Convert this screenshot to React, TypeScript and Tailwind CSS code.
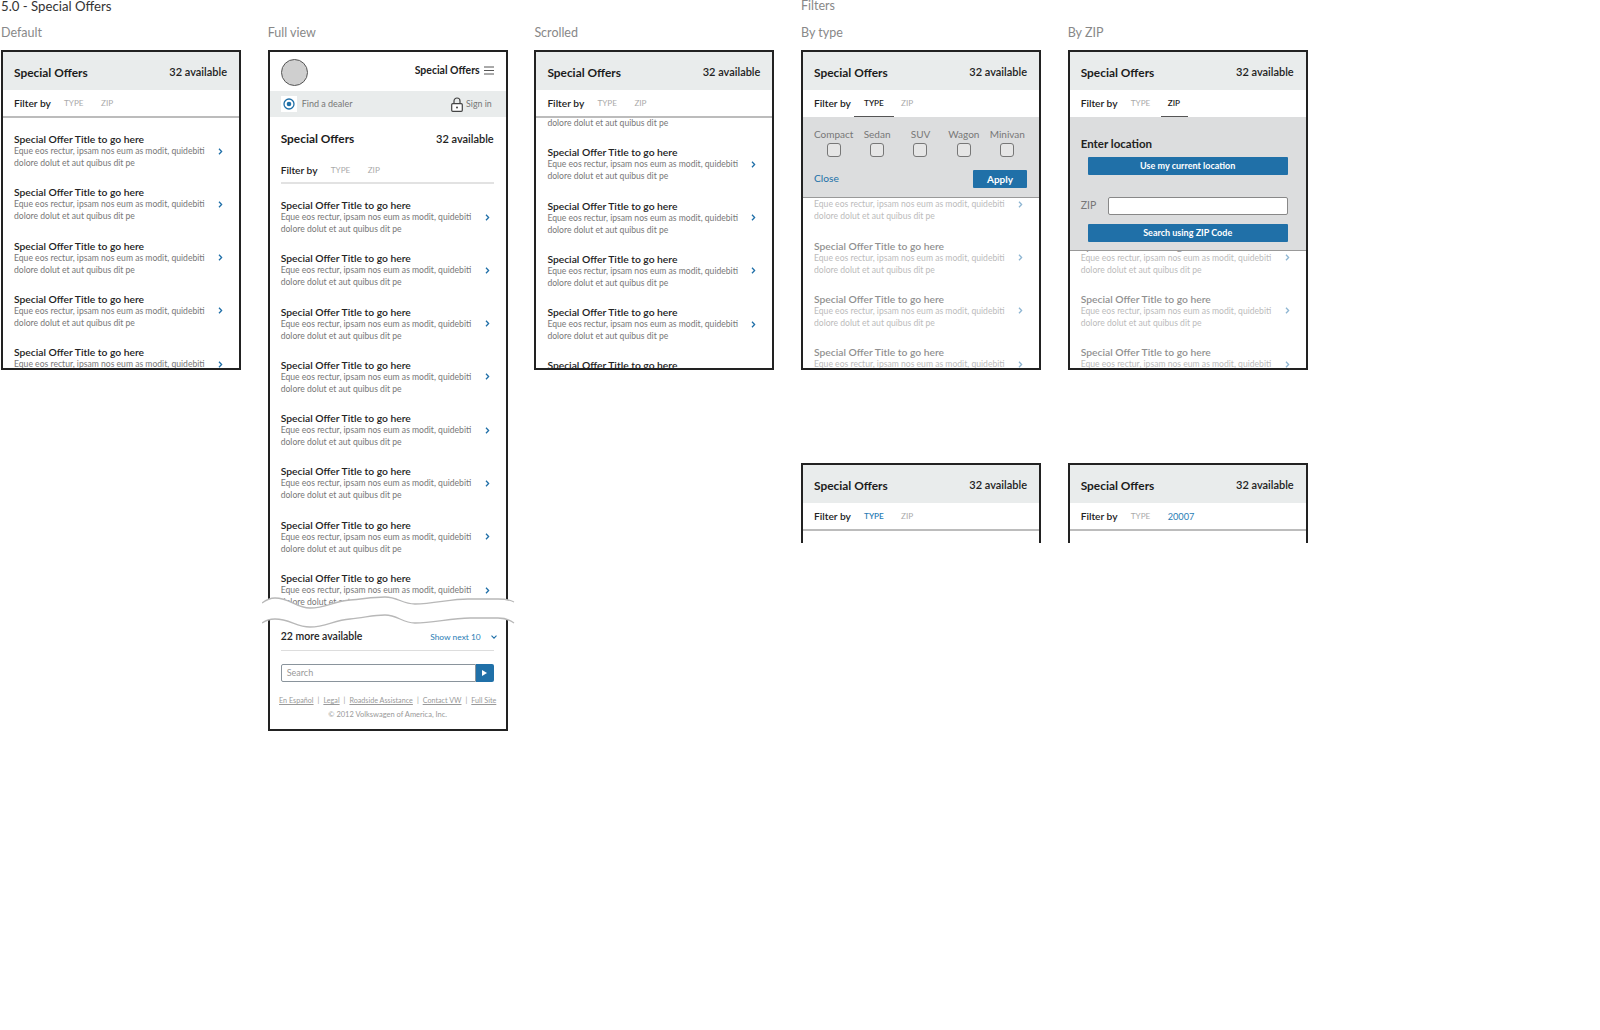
const FONT = "font-['Lato','Liberation_Sans',sans-serif]";

function Chevron() {
  return (
    <svg width="5" height="7" viewBox="0 0 5 7" className="shrink-0">
      <path d="M1 0.8 L3.6 3.5 L1 6.2" fill="none" stroke="#1f6fa8" strokeWidth="1.3" />
    </svg>
  );
}

function Item() {
  return (
    <div className="h-[53.3px] shrink-0 pt-[15px] pl-[11px]">
      <div className="h-[12px] text-[10.3px] leading-[12px] font-semibold text-[#222] whitespace-nowrap">
        Special Offer Title to go here
      </div>
      <div className="flex h-[12px] items-center">
        <div className="w-[204px] text-[8.6px] leading-[12px] text-[#777] whitespace-nowrap">
          Eque eos rectur, ipsam nos eum as modit, quidebiti
        </div>
        <Chevron />
      </div>
      <div className="h-[12px] text-[8.6px] leading-[12px] text-[#777] whitespace-nowrap">
        dolore dolut et aut quibus dit pe
      </div>
    </div>
  );
}

function Items({ count, dim = false }: { count: number; dim?: boolean }) {
  return (
    <div className={dim ? "flex flex-col opacity-50" : "flex flex-col"}>
      {Array.from({ length: count }, (_, i) => (
        <Item key={i} />
      ))}
    </div>
  );
}

function Header() {
  return (
    <div className="flex h-[38px] items-center justify-between bg-[#e9ecec] pt-[3px] pr-[12px] pl-[11px]">
      <span className="text-[11.9px] font-bold text-[#1c1c1c]">Special Offers</span>
      <span className="text-[11px] font-semibold text-[#222]">32 available</span>
    </div>
  );
}

function FilterRow({ type = "plain", zip = "ZIP", active }: { type?: string; zip?: string; active?: "type" | "zip" }) {
  return (
    <div
      className={
        active
          ? "relative flex h-[28px] items-center border-b-2 border-transparent pt-[1px] pl-[11px] text-[8.2px]"
          : "relative flex h-[28px] items-center border-b-2 border-[#bcbcbc] pt-[1px] pl-[11px] text-[8.2px]"
      }
    >
      <span className="w-[50px] text-[10.2px] font-semibold text-[#222]">Filter by</span>
      <span
        className={
          type === "blue"
            ? "w-[37px] font-semibold text-[#2a7db5]"
            : active === "type"
              ? "w-[37px] font-semibold text-[#222]"
              : "w-[37px] text-[#aaa]"
        }
      >
        TYPE
      </span>
      <span
        className={
          zip === "20007"
            ? "text-[9.2px] text-[#2a7db5]"
            : active === "zip"
              ? "font-semibold text-[#222]"
              : "text-[#aaa]"
        }
      >
        {zip}
      </span>
      {active === "type" && <div className="absolute bottom-[-1px] left-[51px] h-[1px] w-[40px] bg-[#555]" />}
      {active === "zip" && <div className="absolute bottom-[-1px] left-[91px] h-[1px] w-[27px] bg-[#555]" />}
    </div>
  );
}

function Phone({ children }: { children: React.ReactNode }) {
  return <div className="relative h-[320px] w-[240px] overflow-hidden border-2 border-[#222]">{children}</div>;
}

function TypePanel() {
  const kinds = ["Compact", "Sedan", "SUV", "Wagon", "Minivan"];
  return (
    <div className="absolute inset-x-0 top-[65px] h-[81px] border-b border-[#999] bg-[#dcddde] pt-[11px]">
      <div className="ml-[9px] grid w-[217px] grid-cols-5">
        {kinds.map((k) => (
          <div key={k} className="flex flex-col items-center">
            <span className="h-[12px] text-[10px] leading-[12px] text-[#777]">{k}</span>
            <span className="mt-[3px] h-[14px] w-[14px] rounded-[3px] border border-[#777] bg-[#e6e6e6]" />
          </div>
        ))}
      </div>
      <div className="mt-[13px] flex items-center justify-between pr-[12px] pl-[11px]">
        <span className="text-[10.2px] text-[#2070a8]">Close</span>
        <span className="flex h-[18px] w-[54px] items-center justify-center rounded-[1px] bg-[#2070a8] text-[10px] font-bold text-white">
          Apply
        </span>
      </div>
    </div>
  );
}

function BlueButton({ label }: { label: string }) {
  return (
    <div className="ml-[18px] flex h-[18px] w-[200px] items-center justify-center rounded-[1px] bg-[#2070a8] text-[9px] font-bold text-white">
      {label}
    </div>
  );
}

function ZipPanel() {
  return (
    <div className="absolute inset-x-0 top-[65px] h-[134px] border-b border-[#999] bg-[#dcddde] pt-[20px]">
      <div className="h-[14px] pl-[11px] text-[11.5px] leading-[14px] font-bold text-[#222]">Enter location</div>
      <div className="mt-[6px]">
        <BlueButton label="Use my current location" />
      </div>
      <div className="mt-[22px] flex items-center pl-[11px]">
        <span className="w-[27px] text-[10.5px] text-[#777]">ZIP</span>
        <div className="h-[18px] w-[180px] rounded-[2px] border border-[#888] bg-white" />
      </div>
      <div className="mt-[9px]">
        <BlueButton label="Search using ZIP Code" />
      </div>
    </div>
  );
}

function Tear() {
  const top = "M0 13 C4 10 8 8 13 8 C28 8 34 18 48 18 C64 18 72 11 88 10 C102 9 110 7 123 7 C136 7 140 14 153 14 C172 14 188 9 206 9 C216 9 226 9 236 9 C243 9 248 10 252 12";
  const bottom = "M0 33 C4 30 8 29 13 29 C28 29 34 37 48 37 C64 37 72 30 88 29 C102 28 110 25 123 25 C136 25 140 33 153 33 C172 33 188 28 208 28 C218 28 226 28 236 28 C243 28 248 30 252 33";
  const fill = `${top} L252 33 C248 30 243 28 236 28 C226 28 218 28 208 28 C188 28 172 33 153 33 C140 33 136 25 123 25 C110 25 102 28 88 29 C72 30 64 37 48 37 C34 37 28 29 13 29 C8 29 4 30 0 33 Z`;
  return (
    <svg width="254" height="40" viewBox="0 0 254 40" className="absolute left-[-8px] top-[538px]">
      <path d={fill} fill="#fff" />
      <path d={top} fill="none" stroke="#b8b8b8" strokeWidth="1.3" />
      <path d={bottom} fill="none" stroke="#b8b8b8" strokeWidth="1.3" />
    </svg>
  );
}

function FullView() {
  const links = ["En Español", "Legal", "Roadside Assistance", "Contact VW", "Full Site"];
  return (
    <div className="relative w-[240px] border-2 border-[#222]">
      <div className="flex h-[39px] items-center justify-between pr-[12px] pl-[11px]">
        <div className="mt-[1px] h-[27px] w-[27px] rounded-full border border-[#555] bg-[#cfcfcf]" />
        <div className="mt-[-2px] flex items-center gap-[4px]">
          <span className="text-[10.5px] font-bold text-[#222]">Special Offers</span>
          <svg width="10" height="9" viewBox="0 0 10 9">
            <path d="M0 1H10M0 4.5H10M0 8H10" stroke="#555" strokeWidth="1" />
          </svg>
        </div>
      </div>
      <div className="flex h-[26px] items-center justify-between bg-[#e9ecec] pr-[14px] pl-[11px]">
        <div className="flex items-center gap-[5px]">
          <div className="flex h-[16px] w-[16px] items-center justify-center bg-white">
            <svg width="12" height="12" viewBox="0 0 12 12">
              <circle cx="6" cy="6" r="5" fill="none" stroke="#2070a8" strokeWidth="1.3" />
              <circle cx="6" cy="6" r="2.3" fill="#2070a8" />
            </svg>
          </div>
          <span className="text-[9px] text-[#777]">Find a dealer</span>
        </div>
        <div className="flex items-center gap-[3px]">
          <svg width="12" height="15" viewBox="0 0 12 15">
            <path d="M3 7V4a3 3 0 0 1 6 0v3" fill="none" stroke="#444" strokeWidth="1.2" />
            <rect x="0.7" y="6.7" width="10.6" height="7.6" rx="1" fill="#fff" stroke="#444" strokeWidth="1.2" />
            <circle cx="6" cy="10.5" r="1" fill="#444" />
          </svg>
          <span className="text-[8.8px] text-[#777]">Sign in</span>
        </div>
      </div>
      <div className="flex h-[47px] items-center justify-between pr-[12px] pb-[3px] pl-[11px]">
        <span className="text-[11.9px] font-bold text-[#1c1c1c]">Special Offers</span>
        <span className="text-[11px] font-semibold text-[#222]">32 available</span>
      </div>
      <div className="mr-[12px] ml-[11px] flex h-[20px] items-start border-b-2 border-[#e2e2e2] text-[8.2px]">
        <span className="w-[50px] text-[10.2px] leading-[12px] font-semibold text-[#222]">Filter by</span>
        <span className="w-[37px] leading-[12px] text-[#aaa]">TYPE</span>
        <span className="leading-[12px] text-[#aaa]">ZIP</span>
      </div>
      <div className="h-[441px] overflow-hidden">
        <Items count={8} />
      </div>
      <Tear />
      <div className="mr-[12px] ml-[11px] flex h-[26px] items-center justify-between border-b border-[#ddd] pb-[1px]">
        <span className="text-[10.5px] font-semibold text-[#222]">22 more available</span>
        <div className="mr-[-3px] flex items-center gap-[10px]">
          <span className="text-[8.4px] text-[#2a7db5]">Show next 10</span>
          <svg width="6" height="4" viewBox="0 0 6 4">
            <path d="M0.5 0.7 L3 3.2 L5.5 0.7" fill="none" stroke="#2070a8" strokeWidth="1.1" />
          </svg>
        </div>
      </div>
      <div className="mt-[13px] mr-[12px] ml-[11px] flex h-[18px]">
        <div className="flex flex-1 items-center rounded-l-[2px] border border-[#8a949c] pl-[5px] text-[9px] text-[#999]">
          Search
        </div>
        <div className="flex w-[18px] items-center justify-center rounded-r-[2px] bg-[#2070a8]">
          <svg width="5" height="6" viewBox="0 0 5 6">
            <path d="M0 0L5 3L0 6Z" fill="#fff" />
          </svg>
        </div>
      </div>
      <div className="mt-[13px] flex items-center justify-center gap-[4px] text-[7.2px] leading-[12px] text-[#999]">
        {links.map((l, i) => (
          <span key={l} className="flex items-center gap-[4px]">
            {i > 0 && <span>|</span>}
            <span className="underline">{l}</span>
          </span>
        ))}
      </div>
      <div className="mt-[2px] pb-[8px] text-center text-[7.5px] leading-[12px] text-[#999]">
        © 2012 Volkswagen of America, Inc.
      </div>
    </div>
  );
}

function Column({ label, children }: { label: string; children: React.ReactNode }) {
  return (
    <div className="flex w-[240px] flex-col">
      <div className="h-[24px] text-[12.5px] leading-[14px] text-[#888]">{label}</div>
      {children}
    </div>
  );
}

export default function App() {
  return (
    <div className={`${FONT} min-h-[1030px] w-[1600px] bg-white pl-[1px]`}>
      <div className="flex">
        <div className="w-[800px]">
          <div className="h-[26px] text-[13.2px] leading-[12px] text-[#333]">5.0 - Special Offers</div>
          <div className="flex gap-[26.7px]">
            <Column label="Default">
              <Phone>
                <Header />
                <FilterRow />
                <Items count={5} />
              </Phone>
            </Column>
            <Column label="Full view">
              <FullView />
            </Column>
            <Column label="Scrolled">
              <Phone>
                <Header />
                <FilterRow />
                <div className="h-[260px] overflow-hidden">
                  <div className="mt-[-40px]">
                    <Items count={6} />
                  </div>
                </div>
              </Phone>
            </Column>
          </div>
        </div>
        <div>
          <div className="h-[26px] text-[12.5px] leading-[12px] text-[#888]">Filters</div>
          <div className="flex gap-[26.7px]">
            <Column label="By type">
              <Phone>
                <Header />
                <FilterRow active="type" />
                <Items count={5} dim />
                <TypePanel />
              </Phone>
              <div className="mt-[93px] h-[80px] w-[240px] border-x-2 border-t-2 border-[#222]">
                <Header />
                <FilterRow type="blue" />
              </div>
            </Column>
            <Column label="By ZIP">
              <Phone>
                <Header />
                <FilterRow active="zip" />
                <Items count={5} dim />
                <ZipPanel />
              </Phone>
              <div className="mt-[93px] h-[80px] w-[240px] border-x-2 border-t-2 border-[#222]">
                <Header />
                <FilterRow zip="20007" />
              </div>
            </Column>
          </div>
        </div>
      </div>
    </div>
  );
}
